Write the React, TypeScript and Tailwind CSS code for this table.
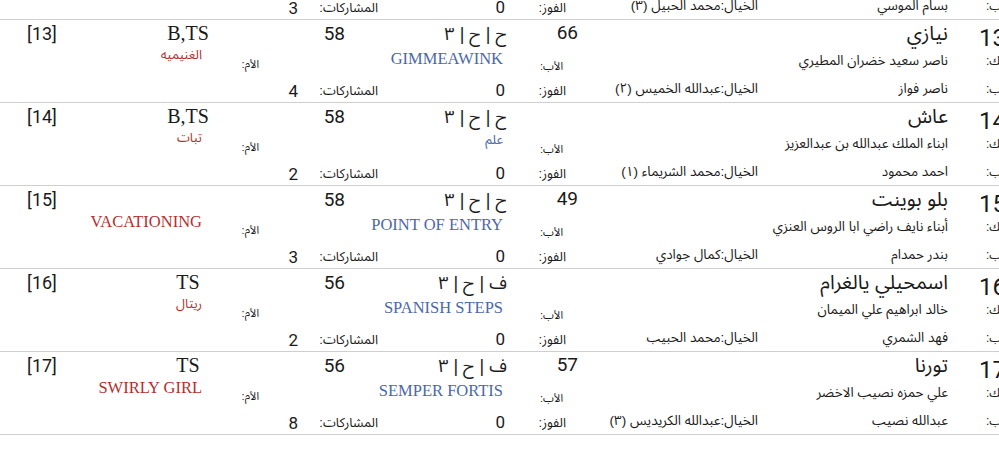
import React from "react";

type Entry = {
  num: string;
  name: string;
  rating: string;
  form: string;
  weight: string;
  gear: string;
  draw: string;
  owner: string;
  sire: string;
  dam: string;
  trainer: string;
  jockey: string;
  wins: string;
  runs: string;
};

const rows: Entry[] = [
  {
    num: "12",
    name: "",
    rating: "",
    form: "",
    weight: "",
    gear: "",
    draw: "",
    owner: "",
    sire: "",
    dam: "",
    trainer: "بسام الموسي",
    jockey: "الخيال:محمد الحبيل (٣)",
    wins: "0",
    runs: "3",
  },
  {
    num: "13",
    name: "نيازي",
    rating: "66",
    form: "ح | ح | ٣",
    weight: "58",
    gear: "B,TS",
    draw: "[13]",
    owner: "ناصر سعيد خضران المطيري",
    sire: "GIMMEAWINK",
    dam: "الغنيميه",
    trainer: "ناصر فواز",
    jockey: "الخيال:عبدالله الخميس (٢)",
    wins: "0",
    runs: "4",
  },
  {
    num: "14",
    name: "عاش",
    rating: "",
    form: "ح | ح | ٣",
    weight: "58",
    gear: "B,TS",
    draw: "[14]",
    owner: "ابناء الملك عبدالله بن عبدالعزيز",
    sire: "علم",
    dam: "تبات",
    trainer: "احمد محمود",
    jockey: "الخيال:محمد الشريماء (١)",
    wins: "0",
    runs: "2",
  },
  {
    num: "15",
    name: "بلو بوينت",
    rating: "49",
    form: "ح | ح | ٣",
    weight: "58",
    gear: "",
    draw: "[15]",
    owner: "أبناء نايف راضي ابا الروس العنزي",
    sire: "POINT OF ENTRY",
    dam: "VACATIONING",
    trainer: "بندر حمدام",
    jockey: "الخيال:كمال جوادي",
    wins: "0",
    runs: "3",
  },
  {
    num: "16",
    name: "اسمحيلي يالغرام",
    rating: "",
    form: "ف | ح | ٣",
    weight: "56",
    gear: "TS",
    draw: "[16]",
    owner: "خالد ابراهيم علي الميمان",
    sire: "SPANISH STEPS",
    dam: "ريتال",
    trainer: "فهد الشمري",
    jockey: "الخيال:محمد الحبيب",
    wins: "0",
    runs: "2",
  },
  {
    num: "17",
    name: "تورنا",
    rating: "57",
    form: "ف | ح | ٣",
    weight: "56",
    gear: "TS",
    draw: "[17]",
    owner: "علي حمزه نصيب الاخضر",
    sire: "SEMPER FORTIS",
    dam: "SWIRLY GIRL",
    trainer: "عبدالله نصيب",
    jockey: "الخيال:عبدالله الكريديس (٣)",
    wins: "0",
    runs: "8",
  },
];

const ar = "font-['Arial','Noto_Sans_Arabic','Noto_Naskh_Arabic','Liberation_Sans','DejaVu_Sans',sans-serif]";
const num = "font-['Roboto','Liberation_Sans',sans-serif]";
const serif = "font-['Liberation_Serif','Times_New_Roman',serif]";

const isLatin = (s: string) => /[A-Z]/.test(s);

function Row({ r, first }: { r: Entry; first?: boolean }) {
  return (
    <div
      className={`flex flex-col h-[83px] border-b border-[#cfcfcf] text-[#1a1a1a] ${
        first ? "-mt-[63px]" : ""
      }`}
    >
      {/* line 1 */}
      <div className="flex h-[27px] items-center">
        <div className={`w-[84px] text-center text-[18px] leading-[22px] ${num}`}>{r.draw}</div>
        <div className={`w-[208px] text-center text-[20px] leading-[22px] -mt-[2px] ${serif}`}>
          {r.gear}
        </div>
        <div className={`w-[53px] text-right text-[19px] leading-[22px] ${num}`}>{r.weight}</div>
        <div dir="rtl" className={`w-[162px] text-right text-[18px] leading-[22px] ${ar}`}>
          {r.form}
        </div>
        <div className={`w-[71px] text-right text-[19px] leading-[22px] -mt-[1px] ${num}`}>
          {r.rating}
        </div>
        <div dir="rtl" className={`w-[370px] text-right text-[20px] leading-[22px] -mt-[1px] ${ar}`}>
          {r.name}
        </div>
        <div className="w-[31px]" />
        <div className={`w-[60px] shrink-0 text-left text-[24px] leading-[26px] pt-[9px] ${num}`}>
          {r.num}
        </div>
      </div>
      {/* line 2 */}
      <div className="flex h-[30px] items-start">
        <div
          dir="rtl"
          className={`w-[202px] text-right ${
            isLatin(r.dam)
              ? `${serif} text-[16.5px] leading-[19px] -mt-[1px]`
              : `${ar} text-[13px] leading-[17px] -mt-[1px]`
          } text-[#b3302f]`}
        >
          {r.dam}
        </div>
        <div dir="rtl" className={`w-[57px] text-right pt-[11px] text-[11px] leading-[13px] ${ar}`}>
          الأم:
        </div>
        <div
          dir="rtl"
          className={`w-[244px] text-right ${
            isLatin(r.sire)
              ? `${serif} text-[16.5px] leading-[19px] pt-[2px]`
              : `${ar} text-[13px] leading-[17px] pt-[1px]`
          } text-[#4c68a8]`}
        >
          {r.sire}
        </div>
        <div dir="rtl" className={`w-[60px] text-right pt-[13px] text-[11px] leading-[13px] ${ar}`}>
          الأب:
        </div>
        <div dir="rtl" className={`w-[385px] text-right pt-[5px] text-[13.5px] leading-[18px] ${ar}`}>
          {r.owner}
        </div>
        <div className="w-[38px]" />
        <div dir="rtl" className={`w-[60px] shrink-0 text-left pt-[6px] text-[12px] leading-[16px] ${ar}`}>
          المالك:
        </div>
      </div>
      {/* line 3 */}
      <div className="flex h-[25px] items-start">
        <div className={`w-[298px] text-right pt-[4px] text-[17px] leading-[20px] ${num}`}>{r.runs}</div>
        <div dir="rtl" className={`w-[80px] text-right pt-[6px] text-[13px] leading-[15px] ${ar}`}>
          المشاركات:
        </div>
        <div className={`w-[127px] text-right pt-[3px] text-[17px] leading-[20px] ${num}`}>{r.wins}</div>
        <div dir="rtl" className={`w-[61px] text-right pt-[6px] text-[13px] leading-[15px] ${ar}`}>
          الفوز:
        </div>
        <div dir="rtl" className={`w-[192px] text-right pt-[3px] text-[13.5px] leading-[18px] ${ar}`}>
          {r.jockey}
        </div>
        <div dir="rtl" className={`w-[190px] text-right pt-[3px] text-[13.5px] leading-[18px] ${ar}`}>
          {r.trainer}
        </div>
        <div className="w-[38px]" />
        <div dir="rtl" className={`w-[60px] shrink-0 text-left pt-[3px] text-[12px] leading-[18px] ${ar}`}>
          المدرب:
        </div>
      </div>
    </div>
  );
}

export default function App() {
  return (
    <div className="w-[999px] h-[453px] overflow-hidden bg-white">
      <div className="w-[1060px]">
        {rows.map((r, i) => (
          <Row key={i} r={r} first={i === 0} />
        ))}
      </div>
    </div>
  );
}
